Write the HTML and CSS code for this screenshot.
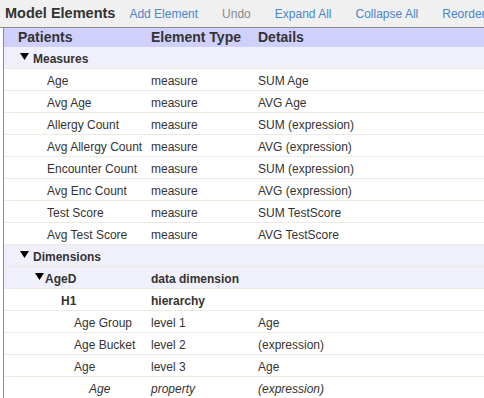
FILE: index.html
```html
<!DOCTYPE html>
<html lang="en">
<head>
    <meta charset="UTF-8">
    <title>Model Elements</title>
    <link rel="stylesheet" href="styles.css">
</head>
<body>
    <div class="toolbar">
        <span class="title">Model Elements</span>
        <a href="#" class="tool">Add Element</a>
        <a href="#" class="tool disabled">Undo</a>
        <a href="#" class="tool">Expand All</a>
        <a href="#" class="tool">Collapse All</a>
        <a href="#" class="tool">Reorder...</a>
    </div>

    <div class="tree-wrap">
        <table class="tree">
            <colgroup>
                <col class="col-name">
                <col class="col-type">
                <col>
            </colgroup>
            <thead>
                <tr>
                    <th class="lvl0">Patients</th>
                    <th>Element Type</th>
                    <th>Details</th>
                </tr>
            </thead>
            <tbody>
                <tr class="group">
                    <td class="lvl1"><svg class="caret" width="9" height="7" viewBox="0 0 9 7"><polygon points="0,0 9,0 4.5,7"/></svg>Measures</td>
                    <td></td>
                    <td></td>
                </tr>
                <tr><td class="lvl2">Age</td><td>measure</td><td>SUM Age</td></tr>
                <tr><td class="lvl2">Avg Age</td><td>measure</td><td>AVG Age</td></tr>
                <tr><td class="lvl2">Allergy Count</td><td>measure</td><td>SUM (expression)</td></tr>
                <tr><td class="lvl2">Avg Allergy Count</td><td>measure</td><td>AVG (expression)</td></tr>
                <tr><td class="lvl2">Encounter Count</td><td>measure</td><td>SUM (expression)</td></tr>
                <tr><td class="lvl2">Avg Enc Count</td><td>measure</td><td>AVG (expression)</td></tr>
                <tr><td class="lvl2">Test Score</td><td>measure</td><td>SUM TestScore</td></tr>
                <tr><td class="lvl2">Avg Test Score</td><td>measure</td><td>AVG TestScore</td></tr>
                <tr class="group">
                    <td class="lvl1"><svg class="caret" width="9" height="7" viewBox="0 0 9 7"><polygon points="0,0 9,0 4.5,7"/></svg>Dimensions</td>
                    <td></td>
                    <td></td>
                </tr>
                <tr class="group">
                    <td class="lvl2b"><svg class="caret tight" width="9" height="7" viewBox="0 0 9 7"><polygon points="0,0 9,0 4.5,7"/></svg>AgeD</td>
                    <td>data dimension</td>
                    <td></td>
                </tr>
                <tr class="strong">
                    <td class="lvl3">H1</td>
                    <td>hierarchy</td>
                    <td></td>
                </tr>
                <tr><td class="lvl4">Age Group</td><td>level 1</td><td>Age</td></tr>
                <tr><td class="lvl4">Age Bucket</td><td>level 2</td><td>(expression)</td></tr>
                <tr><td class="lvl4">Age</td><td>level 3</td><td>Age</td></tr>
                <tr class="prop"><td class="lvl5">Age</td><td>property</td><td>(expression)</td></tr>
            </tbody>
        </table>
    </div>
</body>
</html>
```

FILE: styles.css
```css
body {
    margin: 0;
    font-family: "Liberation Sans", Arial, sans-serif;
    font-size: 12px;
    color: #333;
    background: white;
    overflow: hidden;
}

/* toolbar */
.toolbar {
    display: flex;
    align-items: baseline;
    gap: 24px;
    height: 27px;
    padding: 0 0 0 5px;
    background-color: #f0f0f0;
    border-bottom: 1px solid #8c8c8c;
    white-space: nowrap;
    line-height: 27px;
    overflow: hidden;
}
.title {
    font-size: 14.5px;
    font-weight: bold;
    color: #333;
    margin-right: -10px;
    flex-shrink: 0;
}
.tool {
    color: #4a86c8;
    text-decoration: none;
    flex-shrink: 0;
}
.tool.disabled {
    color: #888;
}

/* tree table */
.tree-wrap {
    margin-left: 3px;
    border-left: 1px solid #8c8c8c;
}
.tree {
    width: 480px;
    border-collapse: collapse;
    table-layout: fixed;
}
.col-name {
    width: 143px;
}
.col-type {
    width: 107px;
}
.tree th {
    background-color: #d0d0fc;
    font-size: 14px;
    font-weight: bold;
    text-align: left;
    line-height: 16px;
    padding: 1px 4px 2px;
    white-space: nowrap;
}
.tree td {
    line-height: 14px;
    padding: 5px 4px 2px;
    border-bottom: 1px solid #ecebe0;
    white-space: nowrap;
    overflow: hidden;
}
.tree tr.group td {
    background-color: #f0f0fc;
    font-weight: bold;
}
.tree tr.strong td {
    font-weight: bold;
}
.tree tr.prop td {
    font-style: italic;
}

.tree .lvl0 { padding-left: 14px; }
.tree .lvl1 { padding-left: 16px; }
.tree .lvl2 { padding-left: 43px; }
.tree .lvl2b { padding-left: 31px; }
.tree .lvl3 { padding-left: 57px; }
.tree .lvl4 { padding-left: 70px; }
.tree .lvl5 { padding-left: 85px; }

.caret {
    display: inline-block;
    vertical-align: 3px;
    margin-right: 4px;
    fill: #000;
}
.caret.tight {
    margin-right: 1px;
}
```
